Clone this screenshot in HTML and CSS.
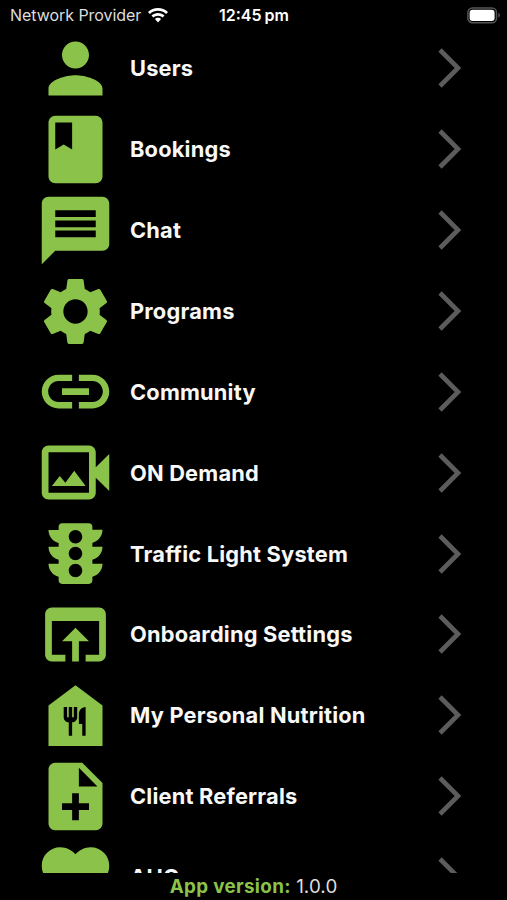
FILE: index.html
```
<!DOCTYPE html>
<html lang="en">
<head>
    <meta charset="UTF-8">
    <meta name="viewport" content="width=device-width, initial-scale=1.0">
    <title>Menu</title>
    <link rel="stylesheet" href="styles.css">
</head>
<body>
    <svg class="sprite" aria-hidden="true">
        <symbol id="chevron" viewBox="0 0 24 40">
            <path d="M2 2l18 18L2 38" fill="none" stroke="currentColor" stroke-width="4.600"/>
        </symbol>
    </svg>

    <header class="status-bar">
        <div class="carrier">
            <span class="carrier-name">Network Provider</span>
            <svg class="wifi" viewBox="0 0 20 15">
                <path d="M10 0C6.200 0 2.700 1.500 0 4l1.900 2C4 4 6.900 2.800 10 2.800S16 4 18.100 6L20 4C17.300 1.500 13.800 0 10 0z"/>
                <path d="M10 4.900c-2.500 0-4.800 1-6.500 2.600l1.900 2C6.600 8.400 8.200 7.700 10 7.700s3.400.7 4.600 1.800l1.900-2C14.800 5.900 12.500 4.900 10 4.900z"/>
                <path d="M10 9.700c-1.200 0-2.300.5-3.100 1.300L10 14.500l3.100-3.500c-.8-.8-1.900-1.300-3.100-1.300z"/>
            </svg>
        </div>
        <div class="clock">12:45<span class="meridiem">pm</span></div>
        <svg class="battery" viewBox="0 0 34 17">
            <rect x="0.900" y="0.900" width="28.600" height="14.800" rx="4.500" fill="none" stroke="#555" stroke-width="1.500"/>
            <rect x="2.600" y="2.700" width="25" height="11.200" rx="3" fill="#fff"/>
            <path d="M31.400 6v4.500c1-.4 1.600-1.200 1.600-2.250S32.400 6.400 31.400 6z" fill="#555"/>
        </svg>
    </header>

    <nav class="menu">
        <a class="menu-item" href="#">
            <svg class="menu-icon" viewBox="0 0 24 24"><path d="M12 12c2.210 0 4-1.790 4-4s-1.790-4-4-4-4 1.790-4 4 1.790 4 4 4zm0 2c-2.670 0-8 1.340-8 4v2h16v-2c0-2.660-5.330-4-8-4z"/></svg>
            <span class="menu-label">Users</span>
            <svg class="chevron"><use href="#chevron"/></svg>
        </a>
        <a class="menu-item" href="#">
            <svg class="menu-icon" viewBox="0 0 24 24"><path d="M18 2H6c-1.100 0-2 .9-2 2v16c0 1.100.9 2 2 2h12c1.100 0 2-.9 2-2V4c0-1.100-.9-2-2-2zM6 4h5v8l-2.500-1.500L6 12V4z"/></svg>
            <span class="menu-label">Bookings</span>
            <svg class="chevron"><use href="#chevron"/></svg>
        </a>
        <a class="menu-item" href="#">
            <svg class="menu-icon" viewBox="0 0 24 24"><path d="M20 2H4c-1.100 0-1.990.9-1.990 2L2 22l4-4h14c1.100 0 2-.9 2-2V4c0-1.100-.9-2-2-2zm-2 12H6v-2h12v2zm0-3H6V9h12v2zm0-3H6V6h12v2z"/></svg>
            <span class="menu-label">Chat</span>
            <svg class="chevron"><use href="#chevron"/></svg>
        </a>
        <a class="menu-item" href="#">
            <svg class="menu-icon" viewBox="0 0 24 24"><path d="M19.140 12.940c.04-.3.06-.61.06-.94 0-.32-.02-.64-.07-.94l2.030-1.580c.18-.14.23-.41.12-.61l-1.920-3.320c-.12-.22-.37-.29-.59-.22l-2.390.96c-.5-.38-1.030-.7-1.620-.94l-.36-2.540c-.04-.24-.24-.41-.48-.41h-3.840c-.24 0-.43.17-.47.41l-.36 2.540c-.59.24-1.130.57-1.620.94l-2.390-.96c-.22-.08-.47 0-.59.22L2.740 8.870c-.12.21-.08.47.12.61l2.030 1.580c-.05.3-.09.63-.09.94s.02.64.07.94l-2.030 1.580c-.18.14-.23.41-.12.61l1.920 3.320c.12.22.37.29.59.22l2.390-.96c.5.38 1.030.7 1.620.94l.36 2.540c.05.24.24.41.48.41h3.840c.24 0 .44-.17.47-.41l.36-2.540c.59-.24 1.130-.56 1.620-.94l2.390.96c.22.08.47 0 .59-.22l1.920-3.320c.12-.22.07-.47-.12-.61l-2.010-1.580zM12 15.600c-1.980 0-3.600-1.620-3.600-3.600s1.620-3.600 3.600-3.600 3.600 1.620 3.600 3.600-1.620 3.600-3.600 3.600z"/></svg>
            <span class="menu-label">Programs</span>
            <svg class="chevron"><use href="#chevron"/></svg>
        </a>
        <a class="menu-item" href="#">
            <svg class="menu-icon" viewBox="0 0 24 24"><path d="M3.900 12c0-1.710 1.390-3.100 3.100-3.100h4V7H7c-2.760 0-5 2.240-5 5s2.240 5 5 5h4v-1.900H7c-1.710 0-3.100-1.390-3.100-3.100zM8 13h8v-2H8v2zm9-6h-4v1.900h4c1.710 0 3.100 1.390 3.100 3.100s-1.390 3.100-3.100 3.100h-4V17h4c2.760 0 5-2.240 5-5s-2.240-5-5-5z"/></svg>
            <span class="menu-label">Community</span>
            <svg class="chevron"><use href="#chevron"/></svg>
        </a>
        <a class="menu-item" href="#">
            <svg class="menu-icon" viewBox="0 0 24 24"><path d="M18 10.480V6c0-1.100-.9-2-2-2H4c-1.100 0-2 .9-2 2v12c0 1.100.9 2 2 2h12c1.100 0 2-.9 2-2v-4.480l4 3.980v-11l-4 3.980zM16 18H4V6h12v12zM11.620 11.500L9 15l-1.670-2L5 16h10z"/></svg>
            <span class="menu-label">ON Demand</span>
            <svg class="chevron"><use href="#chevron"/></svg>
        </a>
        <a class="menu-item" href="#">
            <svg class="menu-icon" viewBox="0 0 24 24"><path d="M20 10h-3V8.860c1.720-.45 3-2 3-3.860h-3V4c0-.55-.45-1-1-1H8c-.55 0-1 .45-1 1v1H4c0 1.860 1.280 3.410 3 3.860V10H4c0 1.860 1.280 3.410 3 3.860V15H4c0 1.860 1.280 3.410 3 3.860V20c0 .55.45 1 1 1h8c.55 0 1-.45 1-1v-1.140c1.720-.45 3-2 3-3.860h-3v-1.140c1.720-.45 3-2 3-3.860zm-8 9c-1.110 0-2-.9-2-2s.89-2 2-2c1.100 0 2 .9 2 2s-.89 2-2 2zm0-5c-1.110 0-2-.9-2-2s.89-2 2-2c1.100 0 2 .9 2 2s-.89 2-2 2zm0-5c-1.110 0-2-.9-2-2s.89-2 2-2c1.100 0 2 .9 2 2s-.89 2-2 2z"/></svg>
            <span class="menu-label">Traffic Light System</span>
            <svg class="chevron"><use href="#chevron"/></svg>
        </a>
        <a class="menu-item" href="#">
            <svg class="menu-icon" viewBox="0 0 24 24"><path d="M19 4H5c-1.110 0-2 .9-2 2v12c0 1.100.89 2 2 2h4v-2H5V8h14v10h-4v2h4c1.100 0 2-.9 2-2V6c0-1.100-.89-2-2-2zm-7 6l-4 4h3v6h2v-6h3l-4-4z"/></svg>
            <span class="menu-label">Onboarding Settings</span>
            <svg class="chevron"><use href="#chevron"/></svg>
        </a>
        <a class="menu-item" href="#">
            <svg class="menu-icon" viewBox="0 0 24 24"><path d="M12 3L4 9v12h16V9l-8-6zm.5 9.500c0 .83-.67 1.500-1.500 1.500v4h-1v-4c-.83 0-1.500-.67-1.500-1.500v-3h1v3h.5v-3h1v3h.5v-3h1v3zm2.500 5.500h-1v-3.500h-1v-3c0-1.100.9-2 2-2V18z"/></svg>
            <span class="menu-label">My Personal Nutrition</span>
            <svg class="chevron"><use href="#chevron"/></svg>
        </a>
        <a class="menu-item" href="#">
            <svg class="menu-icon" viewBox="0 0 24 24"><path d="M14 2H6c-1.100 0-1.990.9-1.990 2L4 20c0 1.100.89 2 1.990 2H18c1.100 0 2-.9 2-2V8l-6-6zm2 14h-3v3h-2v-3H8v-2h3v-3h2v3h3v2zm-3-7V3.500L18.500 9H13z"/></svg>
            <span class="menu-label">Client Referrals</span>
            <svg class="chevron"><use href="#chevron"/></svg>
        </a>
        <a class="menu-item" href="#">
            <svg class="menu-icon" viewBox="0 0 24 24"><path d="M12 21.350l-1.450-1.320C5.400 15.360 2 12.280 2 8.500 2 5.420 4.420 3 7.500 3c1.740 0 3.410.81 4.500 2.090C13.090 3.810 14.760 3 16.500 3 19.580 3 22 5.420 22 8.500c0 3.780-3.400 6.860-8.550 11.540L12 21.350z"/></svg>
            <span class="menu-label">AHC</span>
            <svg class="chevron"><use href="#chevron"/></svg>
        </a>
    </nav>

    <footer class="app-version"><strong>App version:</strong> <span class="version-number">1.0.0</span></footer>
</body>
</html>
```
FILE: styles.css
```
* {
    margin: 0;
    padding: 0;
    box-sizing: border-box;
}

body {
    height: 100vh;
    background: #000;
    color: #fff;
    font-family: Inter, Roboto, sans-serif;
    display: flex;
    flex-direction: column;
    overflow: hidden;
}

.sprite {
    display: none;
}

.status-bar {
    flex: none;
    height: 28px;
    padding: 2px 6px 0 10px;
    display: grid;
    grid-template-columns: 1fr auto 1fr;
    align-items: center;
    font-size: 16px;
}

.carrier {
    display: flex;
    align-items: center;
    gap: 7px;
    white-space: nowrap;
}

.carrier-name {
    color: #ddd;
    letter-spacing: -0.05px;
}

.wifi {
    width: 20px;
    height: 15px;
    fill: #fff;
}

.clock {
    font-weight: 600;
    margin-right: 3px;
}

.meridiem {
    margin-left: 3px;
}

.battery {
    justify-self: end;
    width: 34px;
    height: 17px;
}

.menu {
    flex: 1;
    min-height: 0;
    overflow: hidden;
}

.menu-item {
    height: 80.87px;
    padding: 0 45px 0 35px;
    display: flex;
    align-items: center;
    color: #f8f8f8;
    text-decoration: none;
}

.menu-icon {
    flex: none;
    width: 81px;
    height: 81px;
    fill: #8bc34a;
}

.menu-label {
    flex: 1;
    margin-left: 14px;
    font-size: 21.8px;
    font-weight: 700;
    letter-spacing: 0.2px;
    white-space: nowrap;
}

.chevron {
    flex: none;
    width: 24px;
    height: 40px;
    color: #5c5c5c;
}

.app-version {
    flex: none;
    height: 27px;
    line-height: 27px;
    text-align: center;
    font-size: 18.8px;
}

.app-version strong {
    color: #8bc34a;
    font-weight: 700;
    letter-spacing: 0.35px;
}

.version-number {
    color: #ddd;
    letter-spacing: 0.1px;
}
```
